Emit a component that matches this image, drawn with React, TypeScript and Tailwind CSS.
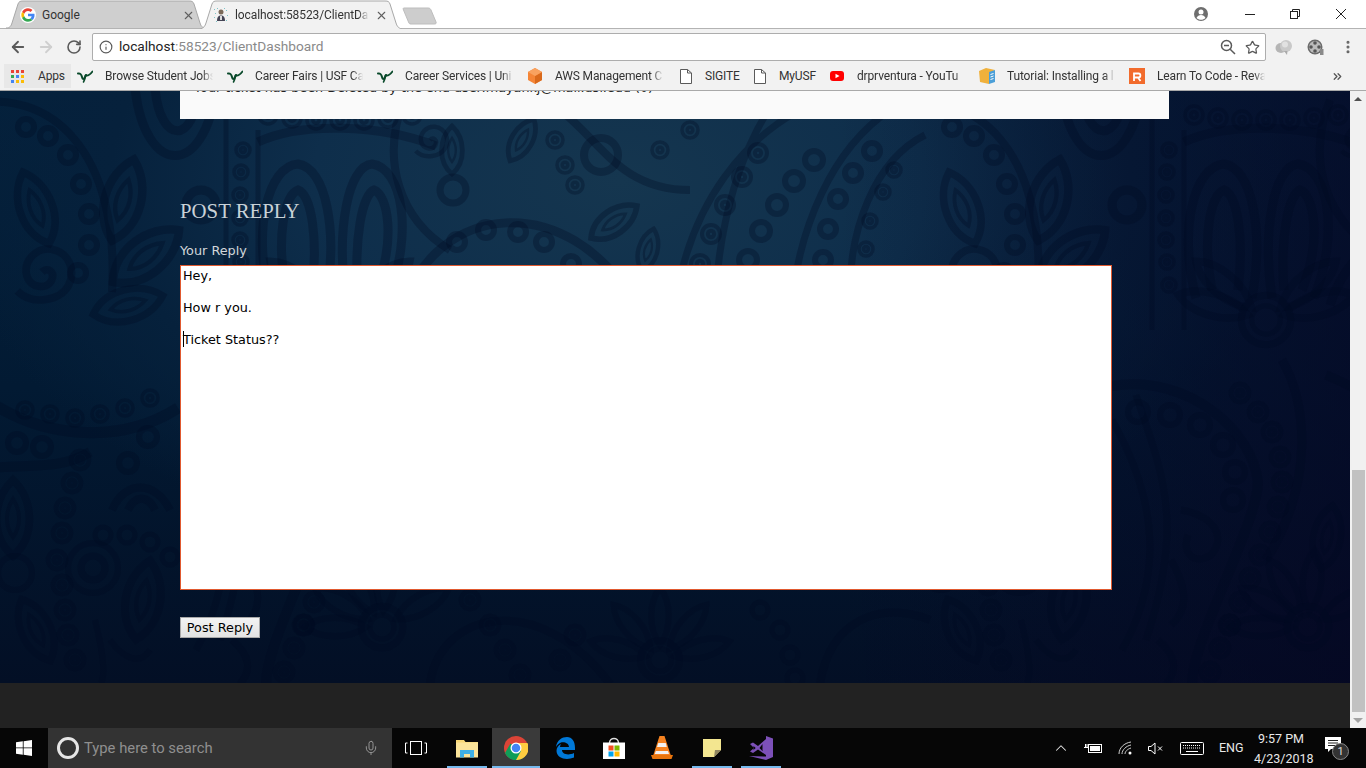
import React from "react";
import { ArrowLeft, ArrowRight, RotateCw, Info, Star, MoreVertical, X, ChevronUp, Mic, ChevronsRight } from "lucide-react";

const ui = { fontFamily: 'Roboto,"Open Sans",sans-serif' };
const verdana = { fontFamily: '"DejaVu Sans",sans-serif' };

function GoogleG() {
  return (
    <svg width="16" height="16" viewBox="0 0 48 48">
      <circle cx="24" cy="24" r="24" fill="#fff" />
      <path fill="#EA4335" d="M24 12c3 0 5.600 1 7.700 3l5.700-5.700C33.900 6.100 29.400 4 24 4 16.200 4 9.500 8.500 6.200 15l6.700 5.200C14.500 15.400 18.800 12 24 12z" />
      <path fill="#4285F4" d="M43.600 24.500c0-1.400-.1-2.700-.4-4.500H24v8h11c-.5 2.600-2 4.800-4.200 6.300l6.500 5c3.900-3.500 6.300-8.700 6.300-14.800z" />
      <path fill="#FBBC05" d="M12.900 28.800c-.4-1.200-.7-2.500-.7-4.800s.3-3.600.7-3.800L6.200 15C4.800 17.700 4 20.800 4 24s.8 6.300 2.200 9z" />
      <path fill="#34A853" d="M24 44c5.400 0 9.900-1.800 13.300-4.700l-6.500-5c-1.800 1.200-4.100 1.900-6.800 1.900-5.200 0-9.500-3.400-11.100-8.300L6.200 33C9.500 39.500 16.200 44 24 44z" />
    </svg>
  );
}

function LoadingFavicon() {
  return (
    <svg width="16" height="16" viewBox="0 0 16 16">
      <circle cx="8" cy="5" r="2.500" fill="#7b6a5a" />
      <path d="M4 14c0-4 1.500-5.500 4-5.500s4 1.500 4 5.500z" fill="#445" />
      <rect x="7" y="9" width="2" height="4" fill="#ddd" />
      <g fill="#7fc4c8">
        <rect x="1" y="2" width="1" height="1" /><rect x="2" y="6" width="1" height="1" /><rect x="1" y="10" width="1" height="1" />
        <rect x="13" y="3" width="1" height="1" /><rect x="14" y="8" width="1" height="1" /><rect x="13" y="13" width="1" height="1" />
        <rect x="4" y="1" width="1" height="1" /><rect x="11" y="1" width="1" height="1" /><rect x="3" y="14" width="1" height="1" />
      </g>
    </svg>
  );
}

function Tab({ w, active, children }: { w: number; active?: boolean; children: React.ReactNode }) {
  return (
    <div className={`relative h-[29px] shrink-0 flex items-center pt-[1px] ${active ? "pl-[13px] pr-[14px]" : "pl-[14px] pr-[11px]"}`} style={{ width: w }}>
      <svg className="absolute inset-0" width={w} height="29" viewBox={`0 0 ${w} 29`}>
        <path
          d={`M0 ${active ? 29 : 28} C4 28 5 26 6 23 L12 4 C13 1.500 14 1 17 1 L${w - 17} 1 C${w - 14} 1 ${w - 13} 1.500 ${w - 12} 4 L${w - 6} 23 C${w - 5} 26 ${w - 4} 28 ${w} ${active ? 29 : 28}`}
          fill={active ? "#f2f2f2" : "#cfcfcf"}
          stroke="#a8a8a8"
          strokeWidth="1"
        />
      </svg>
      <div className="relative flex items-center gap-[6px] w-full">{children}</div>
    </div>
  );
}

function TitleBar() {
  return (
    <div className="relative h-[29px] bg-white flex items-start shrink-0 border-b border-[#b3b3b3]">
      <div className="flex pl-[6px]">
        <Tab w={200}>
          <GoogleG />
          <span className="text-[12px] text-[#333] flex-1" style={ui}>Google</span>
          <X size={13} strokeWidth={2} className="text-[#5f5f5f]" />
        </Tab>
        <div className="-ml-[6px] relative z-10">
          <Tab w={202} active>
            <LoadingFavicon />
            <span className="text-[12px] text-[#333] flex-1 whitespace-nowrap overflow-hidden tracking-[-0.1px] [mask-image:linear-gradient(to_right,black_92%,transparent)]" style={ui}>localhost:58523/ClientDa</span>
            <X size={13} strokeWidth={2} className="text-[#5f5f5f]" />
          </Tab>
        </div>
        <svg width="36" height="19" viewBox="0 0 36 19" className="mt-[7px]">
          <path d="M2 1 L26 1 C28 1 28.500 2 29 3 L34 15 C34.500 16.500 34 17 32 17 L9 17 C7.500 17 7 16.500 6.500 15 L1.500 3 C1 1.500 1 1 2 1z" fill="#cdcdcd" stroke="#bdbdbd" />
        </svg>
      </div>
      <div className="flex-1" />
      <div className="flex items-center h-[27px] text-[#222]">
        <svg width="16" height="16" viewBox="0 0 16 16" className="mr-[34px]">
          <circle cx="8" cy="8" r="7" fill="#6e6e6e" />
          <circle cx="8" cy="6" r="2.500" fill="#fff" />
          <path d="M3.500 12c.8-2 2.600-3 4.500-3s3.700 1 4.500 3c-1.200 1.200-2.800 1.800-4.500 1.800s-3.300-.6-4.500-1.800z" fill="#fff" />
        </svg>
        <svg width="14" height="12" viewBox="0 0 14 12" className="mr-[32px]" stroke="#222">
          <path d="M2 6.500 H12" />
        </svg>
        <svg width="12" height="12" viewBox="0 0 12 12" className="mr-[34px]" fill="none" stroke="#222">
          <rect x="1.500" y="3.500" width="7" height="7" />
          <path d="M3.500 3.500V1.500H10.500V8.500H8.500" />
        </svg>
        <svg width="12" height="12" viewBox="0 0 12 12" className="mr-[19px]" stroke="#222" strokeWidth="1">
          <path d="M1 1 L11 11 M11 1 L1 11" />
        </svg>
      </div>
    </div>
  );
}

function Toolbar() {
  return (
    <div className="h-[34px] bg-[#f2f2f2] flex items-center shrink-0 pl-[9px] pr-[9px] pt-[2px]">
      <ArrowLeft size={18} strokeWidth={2.4} className="text-[#5a5a5a]" />
      <ArrowRight size={18} strokeWidth={2.4} className="text-[#cfcfcf] ml-[10px]" />
      <RotateCw size={16} strokeWidth={2.4} className="text-[#5a5a5a] ml-[11px]" />
      <div className="ml-[10px] w-[1174px] h-[28px] bg-white border border-[#adadad] rounded-[2px] flex items-center pl-[6px] pr-[5px]">
        <Info size={14} strokeWidth={2} className="text-[#5a5a5a]" />
        <span className="ml-[6px] text-[13.700px] leading-none text-[#222] flex-1" style={ui}>
          localhost<span className="text-[#8a8a8a]">:58523/ClientDashboard</span>
        </span>
        <svg width="16" height="16" viewBox="0 0 16 16" fill="none" stroke="#5a5a5a" strokeWidth="1.500" className="mr-[9px]">
          <circle cx="6.500" cy="6.500" r="5" />
          <path d="M4 6.500H9 M10.200 10.200 L15 15" />
        </svg>
        <Star size={15} strokeWidth={2} className="text-[#5a5a5a]" />
      </div>
      <svg width="18" height="18" viewBox="0 0 18 18" className="ml-[9px]">
        <ellipse cx="6" cy="10" rx="5.500" ry="5" fill="#b5b5b5" />
        <circle cx="11" cy="8" r="6" fill="#c9c9c9" />
        <circle cx="10" cy="6.500" r="3" fill="#e1e1e1" />
        <path d="M9 13 L12 17 L12.500 13z" fill="#aaa" />
      </svg>
      <svg width="18" height="18" viewBox="0 0 18 18" className="ml-[13px]">
        <circle cx="9" cy="9" r="7.500" fill="#6b6b6b" />
        <circle cx="9" cy="9" r="6" fill="#bbb" />
        <g fill="#555"><circle cx="9" cy="5" r="1.800" /><circle cx="13" cy="9" r="1.800" /><circle cx="9" cy="13" r="1.800" /><circle cx="5" cy="9" r="1.800" /></g>
        <rect x="14" y="11" width="3.500" height="6" fill="#8a8a8a" />
      </svg>
      <MoreVertical size={16} strokeWidth={2.6} className="text-[#666] ml-[16px]" />
    </div>
  );
}

function Usf() {
  return (
    <svg width="16" height="16" viewBox="0 0 16 16" fill="none" stroke="#0a4a2b" strokeLinecap="round">
      <path d="M1 5.500 C3 5 4.500 6.500 5 9 C5.500 11.500 6.800 11.500 7.800 9.500 L9 7" strokeWidth="2" />
      <path d="M8.500 8 C8 10.500 7.500 12.500 6.500 14" strokeWidth="1.600" />
      <path d="M8.500 7.500 C11 8 13.500 6.500 15.500 3.500" strokeWidth="1.800" />
    </svg>
  );
}

function Aws() {
  return (
    <svg width="16" height="16" viewBox="0 0 16 16">
      <path d="M8 0 L15 4 V12 L8 16 L1 12 V4z" fill="#f58536" />
      <path d="M8 8 L15 4 V12 L8 16z" fill="#d9691b" />
      <path d="M8 0 L15 4 L8 8 L1 4z" fill="#f9a25f" />
    </svg>
  );
}

function FileIcon() {
  return (
    <svg width="16" height="16" viewBox="0 0 16 16" fill="#fff" stroke="#5a5a5a">
      <path d="M2.500 1.500H9.500L13.500 5V15.500H2.500z" />
      <path d="M9.500 1.500V5H13.500" fill="none" />
    </svg>
  );
}

function YouTube() {
  return (
    <svg width="16" height="16" viewBox="0 0 16 16">
      <rect x="1" y="3" width="14" height="10" rx="3" fill="#f00" />
      <path d="M6.500 5.800 L10.500 8 L6.500 10.200z" fill="#fff" />
    </svg>
  );
}

function TutorialIcon() {
  return (
    <svg width="16" height="16" viewBox="0 0 16 16">
      <path d="M0 3 L7 0 L16 2 L10 5 V16 L1 14z" fill="#f0b13c" />
      <path d="M10 4 L16 2 V14 L10 16z" fill="#4c9fd8" />
      <path d="M11.500 6.500 L14.500 5.500 M11.500 9 L14.500 8 M11.500 11.500 L14.500 10.500" stroke="#fff" />
    </svg>
  );
}

function RevIcon() {
  return (
    <svg width="16" height="16" viewBox="0 0 16 16">
      <rect width="16" height="16" fill="#f26b2c" />
      <path d="M5 13V5.500H9.500C12 5.500 12 9.500 9.500 9.500H5 M9 9.500L11.500 13" stroke="#fff" strokeWidth="1.800" fill="none" />
    </svg>
  );
}

function Bookmark({ icon, label, cls = "ml-[14px] gap-[12px]", text = "w-[108px] [mask-image:linear-gradient(to_right,black_90%,transparent)]" }: { icon: React.ReactNode; label: string; cls?: string; text?: string }) {
  return (
    <div className={`flex items-center shrink-0 ${cls}`}>
      <span className="w-[16px] h-[16px] shrink-0">{icon}</span>
      <span className={`overflow-hidden whitespace-nowrap ${text}`}>{label}</span>
    </div>
  );
}

function BookmarkBar() {
  return (
    <div className="h-[28px] bg-[#f2f2f2] border-b border-[#a9a9a9] flex items-center shrink-0 text-[12px] tracking-[-0.15px] text-[#333] pb-[1px]" style={ui}>
      <div className="ml-[4px] w-[67px] h-[24px] bg-[#e8e8e8] flex items-center pl-[7px] gap-[14px] shrink-0">
        <svg width="13" height="13" viewBox="0 0 13 13">
          <rect x="0" y="0" width="3" height="3" fill="#ea4335" /><rect x="5" y="0" width="3" height="3" fill="#ea4335" /><rect x="10" y="0" width="3" height="3" fill="#ea4335" />
          <rect x="0" y="5" width="3" height="3" fill="#34a853" /><rect x="5" y="5" width="3" height="3" fill="#4285f4" /><rect x="10" y="5" width="3" height="3" fill="#fbbc05" />
          <rect x="0" y="10" width="3" height="3" fill="#4285f4" /><rect x="5" y="10" width="3" height="3" fill="#fbbc05" /><rect x="10" y="10" width="3" height="3" fill="#fbbc05" />
        </svg>
        <span>Apps</span>
      </div>
      <div className="-ml-[8px] flex items-center">
        <Bookmark icon={<Usf />} label="Browse Student Jobs" />
        <Bookmark icon={<Usf />} label="Career Fairs | USF Ca" />
        <Bookmark icon={<Usf />} label="Career Services | Uni" />
        <Bookmark icon={<Aws />} label="AWS Management C" />
        <Bookmark icon={<FileIcon />} label="SIGITE" cls="ml-[15px] gap-[11px]" text="w-[36px]" />
        <Bookmark icon={<FileIcon />} label="MyUSF" cls="ml-[11px] gap-[11px]" text="w-[39px]" />
        <Bookmark icon={<YouTube />} label="drprventura - YouTu" cls="ml-[11px] gap-[12px]" />
        <Bookmark icon={<TutorialIcon />} label="Tutorial: Installing a l" />
        <Bookmark icon={<RevIcon />} label="Learn To Code - Reva" />
      </div>
      <div className="flex-1" />
      <ChevronsRight size={13} strokeWidth={2.4} className="text-[#555] mr-[22px]" />
    </div>
  );
}

type P = [number, number];

function Dots({ pts, r, sw = 6 }: { pts: P[]; r: number; sw?: number }) {
  return <g strokeWidth={sw}>{pts.map(([x, y], i) => <circle key={i} cx={x} cy={y} r={r} />)}</g>;
}

function Rings({ pts, r, sw = 3.500 }: { pts: P[]; r: number; sw?: number }) {
  return (
    <g strokeWidth={sw}>
      {pts.map(([x, y], i) => (
        <g key={i}>
          <circle cx={x} cy={y} r={r} />
          <circle cx={x} cy={y} r={r * 0.35} />
        </g>
      ))}
    </g>
  );
}

function Drop({ x, y, a, s = 1 }: { x: number; y: number; a: number; s?: number }) {
  return (
    <g transform={`translate(${x} ${y}) rotate(${a}) scale(${s})`}>
      <path d="M0 40 C-24 20 -22 -20 0 -40 C22 -20 24 20 0 40z" strokeWidth="8" />
      <path d="M0 20 C-9 8 -8 -8 0 -20 C8 -8 9 8 0 20z" strokeWidth="4" />
    </g>
  );
}

function Spiral({ x, y, s = 1 }: { x: number; y: number; s?: number }) {
  return (
    <path
      transform={`translate(${x} ${y}) scale(${s})`}
      d="M0 0 C6 -6 14 0 10 9 C5 19 -12 17 -16 4 C-20 -12 -6 -26 10 -24 C28 -21 36 -2 28 14 C20 30 -10 36 -26 20"
      strokeWidth="8"
    />
  );
}

function Fan({ x, y, angles, s = 1 }: { x: number; y: number; angles: number[]; s?: number }) {
  return (
    <g>
      {angles.map((a, i) => (
        <g key={i} transform={`translate(${x} ${y}) rotate(${a}) scale(${s})`}>
          <path d="M0 -20 C-16 -42 -15 -78 0 -96 C15 -78 16 -42 0 -20z" strokeWidth="8" />
        </g>
      ))}
      <circle cx={x} cy={y} r={15 * s} strokeWidth="5" />
      <circle cx={x} cy={y} r={26 * s} strokeWidth="7" />
    </g>
  );
}

function Tile() {
  return (
    <g>
      <path d="M-30 104 C50 88 120 150 112 292" strokeWidth="8" />
      <Dots pts={[[26, 127], [48, 136], [68, 155], [81, 184], [89, 214], [89, 245], [78, 273]]} r={8} />
      <Spiral x={42} y={272} s={0.95} />
      <Drop x={36} y={208} a={-20} s={0.95} />
      <Drop x={123} y={200} a={15} s={1.05} />
      <Drop x={146} y={256} a={52} s={1.05} />
      <Drop x={128} y={305} a={75} s={0.9} />
      <circle cx="201" cy="205" r="15" strokeWidth="9" />
      <path d="M135 88 C145 178 205 178 216 88 M155 88 C160 145 195 145 198 88" strokeWidth="9" />
      <Rings pts={[[243, 150], [241, 172], [240, 195], [240, 218], [240, 240], [241, 262], [243, 285]]} r={7} sw={3.500} />
      <path d="M226 110 V330 M258 130 V330" strokeWidth="5" />

      <path d="M270 298 C252 230 268 166 298 164 C326 168 338 230 326 298 M286 290 C276 240 284 195 298 190 C312 195 318 240 312 290" strokeWidth="9" />
      <path d="M346 298 C336 230 348 166 372 164 C402 168 414 232 388 298 M358 290 C354 240 362 195 374 190 C388 195 396 240 376 290" strokeWidth="9" />
      <path d="M258 142 C300 122 380 124 436 146" strokeWidth="9" />
      <Rings pts={[[268, 115], [292, 118], [316, 120], [340, 120], [364, 120], [388, 118], [412, 115]]} r={9} sw={3.500} />
      <Fan x={340} y={320} angles={[-74, -50, 50, 74]} s={0.95} />

      <path d="M404 305 C436 205 566 186 636 305" strokeWidth="9" />
      <Dots pts={[[457, 242], [486, 230], [518, 232], [544, 242], [571, 264], [588, 282]]} r={8} sw={6} />
      <Spiral x={500} y={288} s={0.55} />
      <Spiral x={430} y={140} s={0.55} />
      <circle cx="453" cy="190" r="13" strokeWidth="7" />
      <Drop x={452} y={150} a={0} s={0.6} />
      <Drop x={522} y={140} a={30} s={0.6} />
      <circle cx="601" cy="155" r="17" strokeWidth="8" />
      <Drop x={614} y={222} a={55} s={0.7} />
      <Drop x={648} y={250} a={15} s={0.55} />
      <path d="M404 100 C380 160 400 220 450 250 M560 110 C600 140 620 190 690 190" strokeWidth="8" />
      <Rings pts={[[555, 140], [565, 165], [575, 185], [660, 150], [690, 130]]} r={8} sw={3.500} />

      <Rings pts={[[758, 153], [742, 177], [725, 205], [711, 234], [700, 264], [692, 295]]} r={9} sw={4} />
      <Dots pts={[[814, 160], [794, 181], [777, 205], [761, 231], [748, 260], [737, 288]]} r={9} />
      <Dots pts={[[872, 151], [853, 173], [838, 199], [828, 229], [823, 260], [820, 292]]} r={8} />
      <Rings pts={[[894, 170], [883, 192], [870, 221], [866, 249], [862, 282]]} r={7} sw={3.500} />
      <path d="M676 300 C690 210 740 130 830 96 M775 100 C740 150 720 220 715 300 M792 300 C800 230 830 150 890 110 M850 300 C848 230 875 160 925 135" strokeWidth="7" />

      <path d="M186 386 C262 374 326 430 332 482 C332 522 266 640 266 684" strokeWidth="10" />
      <path d="M186 420 C220 480 246 560 196 650 M210 395 C235 470 260 520 220 640" strokeWidth="7" />
      <Dots pts={[[212, 412], [244, 415], [274, 425], [297, 445], [309, 472], [307, 500]]} r={10} sw={6} />
      <Rings pts={[[314, 393], [332, 412], [346, 432], [354, 457], [356, 482], [352, 507], [344, 532], [334, 555], [324, 578], [314, 602], [304, 625], [294, 648], [284, 672]]} r={9} sw={4.500} />
      <path d="M255 510 C285 515 302 535 285 555 C270 565 255 555 262 535 M245 560 C262 590 262 610 245 625 M232 640 C250 655 252 670 240 684" strokeWidth="7" />
      <path d="M356 360 C380 400 390 480 340 560 M400 375 C412 380 424 385 430 390" strokeWidth="9" />
      <Fan x={382} y={627} angles={[-90, -60, -30, 5, 60]} s={0.8} />
      <Drop x={401} y={537} a={10} s={0.8} />

      <path d="M-20 395 C40 440 120 445 178 408" strokeWidth="11" />
      <Rings pts={[[25, 410], [50, 414], [75, 418], [100, 414], [125, 408], [150, 398]]} r={8} sw={3.500} />
      <path d="M-10 468 C30 464 60 470 90 452" strokeWidth="10" />
      <Dots pts={[[17, 443], [42, 447], [128, 463], [148, 437]]} r={9} sw={6} />
      <Rings pts={[[80, 460], [72, 483], [65, 508], [62, 533], [57, 560], [62, 585], [65, 610], [68, 635], [75, 660]]} r={9} sw={4.500} />
      <Drop x={13} y={518} a={0} s={0.95} />
      <Drop x={36} y={630} a={-25} s={0.85} />
      <circle cx="15" cy="573" r="17" strokeWidth="6" />
      <circle cx="93" cy="568" r="12" strokeWidth="7" />
      <circle cx="93" cy="568" r="25" strokeWidth="6" />
      <Dots pts={[[103, 535], [127, 535], [150, 542], [170, 557]]} r={8} sw={5} />
      <path d="M112 510 C125 480 155 480 170 510 M128 510 C135 495 148 495 155 510" strokeWidth="8" />
      <Drop x={143} y={600} a={10} s={1} />
      <path d="M110 640 C125 660 140 665 150 650 M95 620 C110 680 100 684 100 684" strokeWidth="6" />

      <Rings pts={[[303, 625], [470, 600], [490, 625], [505, 650], [520, 675], [560, 660], [575, 635]]} r={9} sw={4.500} />
      <Fan x={660} y={660} angles={[-75, -40, 0, 40, 75]} s={0.75} />
      <Dots pts={[[760, 610], [780, 630], [790, 655], [795, 678]]} r={8} sw={5} />
      <path d="M430 684 C440 610 540 590 610 684 M820 684 C830 620 880 600 930 620" strokeWidth="8" />
    </g>
  );
}

function Paisley() {
  return (
    <svg className="absolute inset-0 w-full h-full" viewBox="0 91 1350 592" preserveAspectRatio="none" aria-hidden="true">
      <g fill="none" stroke="#000a20" strokeOpacity="0.3" strokeWidth="5">
        <Tile />
        <g transform="translate(926 0)"><Tile /></g>
      </g>
    </svg>
  );
}

function Page() {
  return (
    <div className="relative flex-1 min-w-0 flex flex-col overflow-hidden" style={verdana}>
      <div className="relative h-[592px] shrink-0 overflow-hidden bg-[#020f24] bg-[linear-gradient(to_right,rgba(2,14,38,0)_62%,rgba(6,4,34,0.6)_100%),radial-gradient(ellipse_680px_400px_at_620px_90px,#15364f_0%,#0e2e4b_45%,#06213c_75%,rgba(4,28,54,0)_100%),linear-gradient(to_bottom,#04213c_0%,#021a33_50%,#030f25_100%)]">
        <Paisley />
        <div className="relative pl-[180px] pr-[181px] flex flex-col">
          <div className="h-[28px] bg-[#fafafa] overflow-hidden">
            <p className="-mt-[11px] pl-[14px] text-[12.750px] leading-[16px] text-[#222] whitespace-nowrap">
              Your ticket has been Deleted by the end user:mayankj@mail.usf.edu (0)
            </p>
          </div>
          <h2 className="mt-[80px] text-[20.800px] leading-[24px] text-[#c9d2d8]" style={{ fontFamily: '"Liberation Serif",serif' }}>POST REPLY</h2>
          <label className="mt-[18px] text-[12.800px] leading-[20px] text-[#d2d6da]">Your Reply</label>
          <div className="relative mt-[4px] w-[932px] h-[325px]">
            <textarea
              readOnly
              className="block w-full h-full resize-none bg-white border border-[#e0592f] px-[2px] py-[2px] text-[12.800px] leading-[16px] text-black outline-none"
              style={verdana}
              defaultValue={"Hey,\n\nHow r you.\n\nTicket Status??"}
            />
            <span className="absolute left-[3px] top-[66px] w-[1px] h-[16px] bg-black" />
          </div>
          <div className="mt-[27px] flex">
            <button className="w-[80px] h-[21px] pt-[2px] bg-gradient-to-b from-[#f3f3f3] to-[#e3e3e3] border border-[#a9a9a9] text-[12.800px] leading-none text-black" style={verdana}>Post Reply</button>
          </div>
        </div>
      </div>
      <div className="flex-1 bg-[#222222]" />
    </div>
  );
}

function Scrollbar() {
  return (
    <div className="w-[16px] shrink-0 bg-[#f1f1f1] flex flex-col items-center">
      <div className="h-[16px] w-full flex items-center justify-center">
        <span className="w-0 h-0 border-x-[4px] border-x-transparent border-b-[4px] border-b-[#505050]" />
      </div>
      <div className="h-[363px] shrink-0" />
      <div className="w-[13px] h-[242px] bg-[#c1c1c1] shrink-0" />
      <div className="flex-1 w-full flex items-center justify-center">
        <span className="w-0 h-0 border-x-[5px] border-x-transparent border-t-[5px] border-t-[#a3a3a3]" />
      </div>
    </div>
  );
}

function WinLogo() {
  return (
    <svg width="16" height="16" viewBox="0 0 16 16" fill="#fff">
      <path d="M0 2.300 L6.800 1.300 V7.500 H0z M7.600 1.200 L16 0 V7.500 H7.600z M0 8.300 H6.800 V14.700 L0 13.700z M7.600 8.300 H16 V16 L7.600 14.800z" />
    </svg>
  );
}

function TaskSlot({ w, active, open, children }: { w: number; active?: boolean; open?: boolean; children: React.ReactNode }) {
  return (
    <div className={`relative h-[40px] shrink-0 flex items-center justify-center ${active ? "bg-[#3a3a3a]" : ""}`} style={{ width: w }}>
      {children}
      {open && <span className="absolute bottom-0 inset-x-0 h-[2px] bg-[#76b9ed]" />}
    </div>
  );
}

function Chrome() {
  return (
    <svg width="24" height="24" viewBox="0 0 48 48">
      <circle cx="24" cy="24" r="24" fill="#db4437" />
      <path d="M24 24 L45 36 A24 24 0 0 1 2 34 L13 15z" fill="#0f9d58" />
      <path d="M24 14 H47 A24 24 0 0 1 24 48 L34 30z" fill="#ffcd40" />
      <circle cx="24" cy="24" r="11" fill="#fff" />
      <circle cx="24" cy="24" r="8.500" fill="#4285f4" />
    </svg>
  );
}

function Explorer() {
  return (
    <svg width="22" height="19" viewBox="0 0 22 19">
      <path d="M0 1 H8 L9.500 3 H22 V18 H0z" fill="#f8d775" />
      <rect y="3.500" width="22" height="15" fill="#fce49a" />
      <path d="M4 18.500 V11 H18 V18.500 H14 V15 H8 V18.500z" fill="#3fb0e6" />
    </svg>
  );
}

function Edge() {
  return (
    <svg width="20" height="24" viewBox="0 0 20 24">
      <path
        d="M1 11 C2 4 7 1 12 1 C17 1 20 5 20 12 V14 H7 C7 18 13 20 19 17 V21.500 C12 24.500 2 23 1.500 15 C1.500 12 3 9.500 6 8 C5.500 9 5 10 5 11 H14 C14 7 9 5.500 6 6.500 C4 7.300 2.300 9 1 11z"
        fill="#0078d7"
      />
    </svg>
  );
}

function Store() {
  return (
    <svg width="24" height="24" viewBox="0 0 24 24">
      <path d="M7.500 7 C7.500 1 16.500 1 16.500 7" fill="none" stroke="#ddd" strokeWidth="1.400" />
      <path d="M1 6.500 H23 V23 H1z" fill="#fff" />
      <rect x="6.500" y="9.500" width="5" height="5" fill="#f25022" />
      <rect x="12.500" y="9.500" width="5" height="5" fill="#7fba00" />
      <rect x="6.500" y="15.500" width="5" height="5" fill="#00a4ef" />
      <rect x="12.500" y="15.500" width="5" height="5" fill="#ffb900" />
    </svg>
  );
}

function Vlc() {
  return (
    <svg width="22" height="24" viewBox="0 0 22 24">
      <path d="M8.500 0 H13.500 L20 20 H2z" fill="#f58220" />
      <path d="M7.300 7 H14.700 L15.800 11 H6z" fill="#f1f1f1" />
      <path d="M4.800 15 H17 L18 18 H3.800z" fill="#f1f1f1" />
      <path d="M0 19 H22 L20.500 23 H1.500z" fill="#e8740c" />
    </svg>
  );
}

function Sticky() {
  return (
    <svg width="18" height="18" viewBox="0 0 18 18">
      <path d="M0 0 H18 V11 L11 18 H0z" fill="#f3e690" />
      <path d="M18 11 L11 18 L12 11z" fill="#8f8560" />
    </svg>
  );
}

function VsIcon() {
  return (
    <svg width="24" height="24" viewBox="0 0 24 24">
      <path d="M17 0 L24 2.500 V21 L17 24 L0 20 L17 20.500z" fill="#7c50b8" />
      <path d="M1 8 L4 6.500 L9 10 L17 3 V19 L9 13.500 L4 17 L1 15.500 L5 12z M13.500 8 L10.500 12 L13.500 15z M4.500 10 V14 L6.700 12z" fill="#7c50b8" fillRule="evenodd" />
    </svg>
  );
}

function Taskbar() {
  return (
    <div className="h-[40px] bg-[#060606] flex items-center shrink-0 text-white" style={ui}>
      <div className="w-[48px] h-full flex items-center justify-center shrink-0">
        <WinLogo />
      </div>
      <div className="w-[344px] h-full bg-[#333333] flex items-center pl-[9px] pr-[13px] shrink-0">
        <span className="w-[22px] h-[22px] rounded-full border-[3px] border-[#e6e6e6] shrink-0" />
        <span className="ml-[5px] pt-[1px] text-[14.800px] text-[#8f8f8f] flex-1">Type here to search</span>
        <Mic size={16} strokeWidth={1.4} className="text-[#9a9a9a]" />
      </div>
      <div className="w-[48px] h-full flex items-center justify-center shrink-0">
        <svg width="22" height="14" viewBox="0 0 22 14" fill="none" stroke="#fff" strokeWidth="1">
          <rect x="5.500" y="0.500" width="11" height="13" />
          <path d="M2.500 2 H0.500 V12 H2.500 M19.500 2 H21.500 V12 H19.500" />
        </svg>
      </div>
      <div className="w-[7px]" />
      <TaskSlot w={40} open><Explorer /></TaskSlot>
      <div className="w-[5px]" />
      <TaskSlot w={48} active open><Chrome /></TaskSlot>
      <TaskSlot w={50}><Edge /></TaskSlot>
      <TaskSlot w={48}><Store /></TaskSlot>
      <TaskSlot w={48}><Vlc /></TaskSlot>
      <div className="w-[6px]" />
      <TaskSlot w={40} open><Sticky /></TaskSlot>
      <div className="w-[9px]" />
      <TaskSlot w={40} open><VsIcon /></TaskSlot>
      <div className="flex-1" />
      <ChevronUp size={18} strokeWidth={1.4} className="text-[#e5e5e5] mr-[14px]" />
      <svg width="18" height="12" viewBox="0 0 18 12" fill="none" stroke="#fff" className="mr-[16px]">
        <rect x="4.500" y="2.500" width="13" height="8" />
        <rect x="6" y="4" width="10" height="5" fill="#fff" stroke="none" />
        <path d="M0 5.500 H4 M1.500 2 V5 M3 2 V5" />
      </svg>
      <svg width="16" height="14" viewBox="0 0 16 14" fill="none" stroke="#d0d0d0" strokeWidth="1" className="mr-[14px]">
        <path d="M1 13 C1 7 6 2 13 1 M4 13 C4 9 8 5 13 4 M7 13 C7 10.500 9.500 8 13 7" />
        <circle cx="12" cy="12" r="1.500" fill="#fff" stroke="none" />
      </svg>
      <svg width="16" height="13" viewBox="0 0 16 13" fill="none" stroke="#fff" strokeWidth="1" className="mr-[16px]">
        <path d="M0.500 4.500 H3 L7 1 V12 L3 8.500 H0.500z M10 4.500 L14 8.500 M14 4.500 L10 8.500" />
      </svg>
      <svg width="24" height="13" viewBox="0 0 24 13" fill="none" stroke="#fff" strokeWidth="1" className="mr-[15px]">
        <rect x="0.500" y="0.500" width="23" height="12" rx="1" />
        <path d="M3 3.500 H21 M3 6 H21" strokeDasharray="1 1" />
        <path d="M6 9.500 H18" />
      </svg>
      <span className="w-[24px] text-[12.500px] mr-[11px] text-[#e8e8e8] whitespace-nowrap">ENG</span>
      <div className="pt-[1px] text-[12.500px] leading-[20px] text-center text-[#e8e8e8] w-[54px] mr-[17px]">
        <div>9:57 PM</div>
        <div>4/23/2018</div>
      </div>
      <div className="relative w-[26px] h-[40px] mr-[15px]">
        <svg width="16" height="15" viewBox="0 0 16 15" className="absolute left-[0px] top-[9px]">
          <path d="M0 0 H16 V12 H6 L3 15 V12 H0z" fill="#fff" />
          <path d="M3 3.500 H13 M3 6 H13 M3 8.500 H10" stroke="#222" />
        </svg>
        <span className="absolute left-[7px] top-[15px] w-[17px] h-[17px] rounded-full bg-[#333] border border-[#888] text-[11px] leading-[15px] text-center text-[#ddd]">1</span>
      </div>
    </div>
  );
}

export default function App() {
  return (
    <div className="w-[1366px] h-[768px] flex flex-col overflow-hidden bg-white">
      <TitleBar />
      <Toolbar />
      <BookmarkBar />
      <div className="flex flex-1 min-h-0">
        <Page />
        <Scrollbar />
      </div>
      <Taskbar />
    </div>
  );
}
